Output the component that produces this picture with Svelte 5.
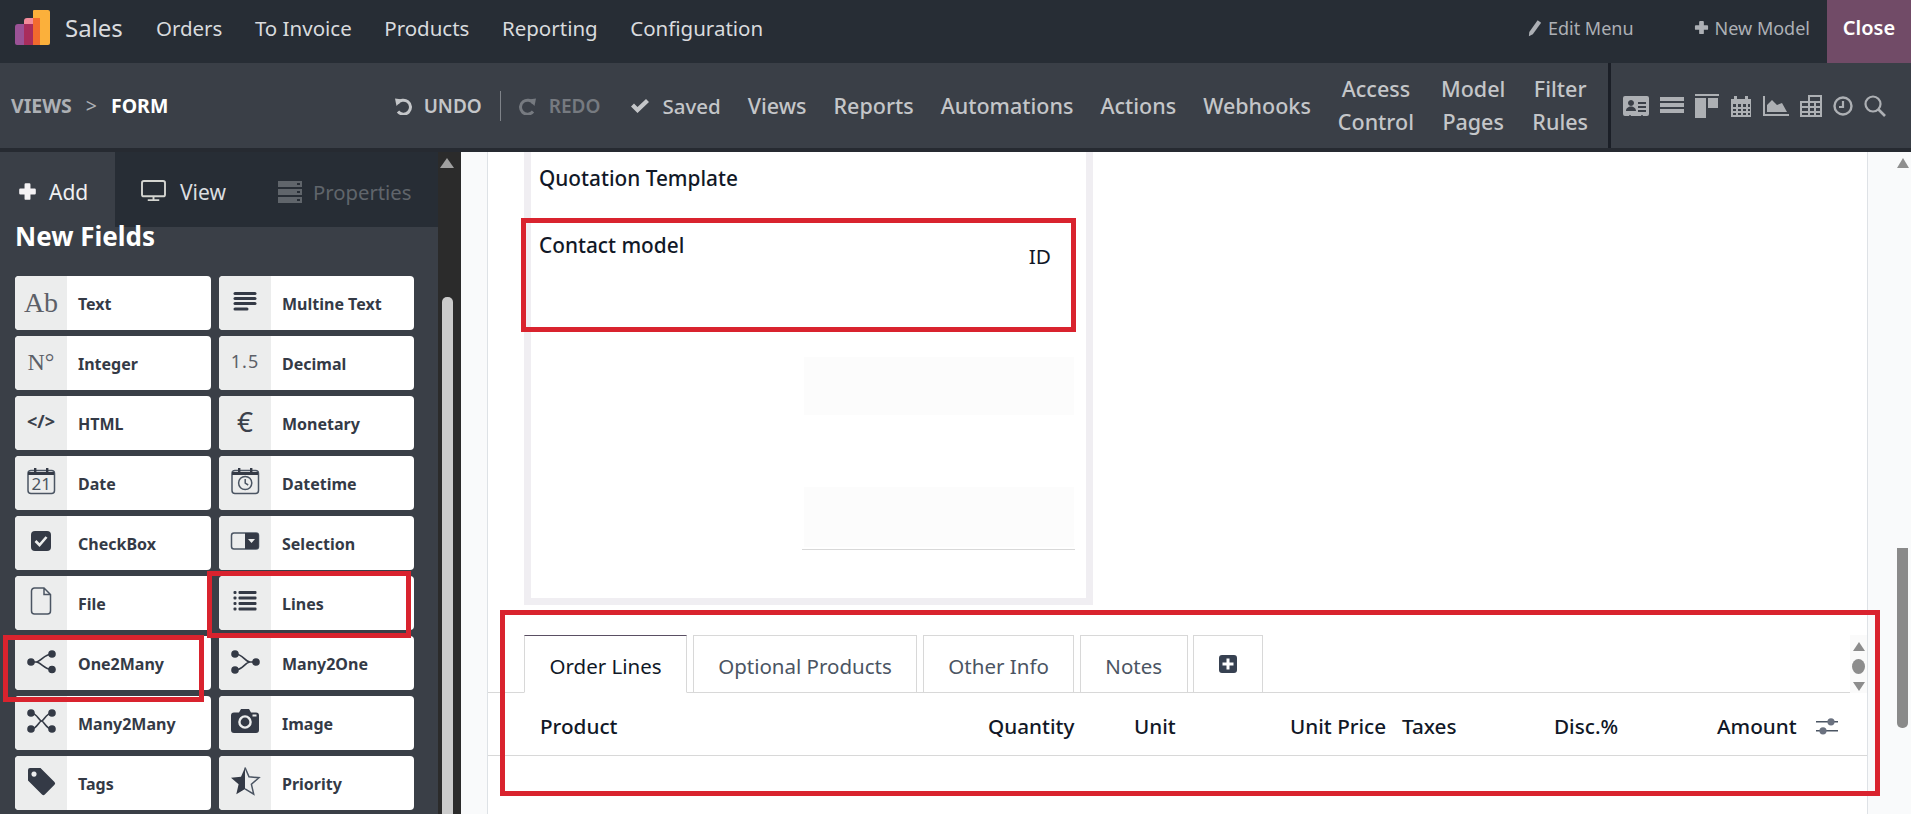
<script>
  const menus = ['Orders', 'To Invoice', 'Products', 'Reporting', 'Configuration']
  const actions = ['Views', 'Reports', 'Automations', 'Actions', 'Webhooks']
  const doubles = [['Access', 'Control'], ['Model', 'Pages'], ['Filter', 'Rules']]
  const fields = [
    ['ab', 'Text'], ['lines', 'Multine Text'],
    ['no', 'Integer'], ['dec', 'Decimal'],
    ['code', 'HTML'], ['euro', 'Monetary'],
    ['date', 'Date'], ['datetime', 'Datetime'],
    ['check', 'CheckBox'], ['select', 'Selection'],
    ['file', 'File'], ['list', 'Lines'],
    ['o2m', 'One2Many'], ['m2o', 'Many2One'],
    ['m2m', 'Many2Many'], ['camera', 'Image'],
    ['tag', 'Tags'], ['star', 'Priority']
  ]
  const tabs = ['Order Lines', 'Optional Products', 'Other Info', 'Notes']
  const columns = ['Product', 'Quantity', 'Unit', 'Unit Price', 'Taxes', 'Disc.%', 'Amount']
</script>

{#snippet fieldIcon(kind)}
  {#if kind === 'ab'}
    <span class="glyph serif ab">Ab</span>
  {:else if kind === 'no'}
    <span class="glyph serif no">N°</span>
  {:else if kind === 'dec'}
    <span class="glyph dec">1.5</span>
  {:else if kind === 'code'}
    <span class="glyph code">&lt;/&gt;</span>
  {:else if kind === 'euro'}
    <span class="glyph euro">€</span>
  {:else}
    <svg class="ficon" viewBox="0 0 32 32" width="32" height="32">
      {#if kind === 'lines'}
        <rect x="4.5" y="7" width="23" height="3" rx="1.5" />
        <rect x="4.5" y="12" width="23" height="3" rx="1.5" />
        <rect x="4.5" y="17" width="23" height="3" rx="1.5" />
        <rect x="4.5" y="22.5" width="15" height="3" rx="1.5" />
      {:else if kind === 'date'}
        <rect class="thin" x="3" y="5.5" width="26.5" height="23" rx="3" />
        <path d="M9 3h2.4v4H9zM21 3h2.4v4H21zM3 7h26v3H3z" />
        <text x="16.2" y="25" text-anchor="middle" class="daynum">21</text>
      {:else if kind === 'datetime'}
        <rect class="thin" x="3" y="5.5" width="26.5" height="23" rx="3" />
        <path d="M9 3h2.4v4H9zM21 3h2.4v4H21zM3 7h26v3H3z" />
        <circle class="thin" cx="16.2" cy="18" r="6.6" />
        <path class="thin" d="M16.2 14v4.2l3 1.8" />
      {:else if kind === 'check'}
        <rect x="6" y="6" width="20" height="20" rx="4" />
        <path d="M10.5 16l4 4 7-8" fill="none" stroke="#eceded" stroke-width="2.6" />
      {:else if kind === 'select'}
        <rect class="thin" x="2.5" y="8" width="27" height="16" rx="2.5" />
        <path d="M16 8h11a2.5 2.5 0 0 1 2.5 2.5v11a2.5 2.5 0 0 1-2.5 2.5h-11z" />
        <path d="M19 14l3.5 4 3.5-4" fill="#eceded" />
      {:else if kind === 'file'}
        <path class="thin" d="M9.5 3h9.5l6.5 6.5V26a3 3 0 0 1-3 3H9.5a3 3 0 0 1-3-3V6a3 3 0 0 1 3-3zM19 3v6.5h6.5" />
      {:else if kind === 'list'}
        <rect x="4.5" y="6" width="3" height="3" rx="1" />
        <rect x="4.5" y="11.5" width="3" height="3" rx="1" />
        <rect x="4.5" y="17" width="3" height="3" rx="1" />
        <rect x="4.5" y="22.5" width="3" height="3" rx="1" />
        <rect x="9.5" y="6" width="18" height="3" rx="1" />
        <rect x="9.5" y="11.5" width="18" height="3" rx="1" />
        <rect x="9.5" y="17" width="18" height="3" rx="1" />
        <rect x="9.5" y="22.5" width="18" height="3" rx="1" />
      {:else if kind === 'o2m'}
        <circle cx="6" cy="17" r="3.8" /><circle cx="27" cy="9" r="3.8" /><circle cx="27" cy="24.5" r="3.8" />
        <path class="wire" d="M6 17h5c5 0 8-8 16-8M11 17c5 0 8 7.5 16 7.5" />
      {:else if kind === 'm2o'}
        <circle cx="27" cy="17" r="3.8" /><circle cx="6" cy="9" r="3.8" /><circle cx="6" cy="25" r="3.8" />
        <path class="wire" d="M27 17h-6c-5 0-7-8-15-8M21 17c-5 0-7 8-15 8" />
      {:else if kind === 'm2m'}
        <circle cx="6" cy="8" r="3.8" /><circle cx="27" cy="8" r="3.8" /><circle cx="6" cy="24" r="3.8" /><circle cx="27" cy="24" r="3.8" />
        <path class="wire" d="M6 8c6 0 8 8 10.5 8S21 8 27 8M6 24c6 0 8-8 10.5-8S21 24 27 24" />
      {:else if kind === 'camera'}
        <path d="M5 7.5h5l2-3.5h8l2 3.5h5a3 3 0 0 1 3 3V25a3 3 0 0 1-3 3H5a3 3 0 0 1-3-3V10.500a3 3 0 0 1 3-3z" />
        <circle cx="16" cy="17" r="5.6" fill="none" stroke="#eceded" stroke-width="2.4" />
        <rect x="23.500" y="9.500" width="4" height="2" fill="#eceded" />
      {:else if kind === 'tag'}
        <path fill-rule="evenodd" d="M5 3h10.500l14 14a2 2 0 0 1 0 2.800l-9.700 9.700a2 2 0 0 1-2.800 0L3 15.500V5a2 2 0 0 1 2-2zM9 6.500a2.600 2.600 0 1 0 .01 0z" />
      {:else if kind === 'star'}
        <path class="thin" d="M16 2.500l4 9.300 10 .9-7.600 6.600 2.300 9.900L16 23.900" />
        <path d="M16 2.500l-4 9.300-10 .9 7.600 6.600-2.300 9.900L16 23.900z" />
      {/if}
    </svg>
  {/if}
{/snippet}

<div class="app">
  <header class="topbar">
    <svg class="logo" viewBox="0 0 35 35" width="35" height="35">
      <path d="M19 0h14a2 2 0 0 1 2 2v31a2 2 0 0 1-2 2H18V1a1 1 0 0 1 1-1z" fill="#fbb03b" />
      <path d="M18 8h7v27h-7z" fill="#f26a2e" />
      <path d="M12 8h6v27H9V11a3 3 0 0 1 3-3z" fill="#f28a9a" />
      <path d="M9 14h9v21H9z" fill="#a92d5c" />
      <path d="M3 14h6v21H2a2 2 0 0 1-2-2V17a3 3 0 0 1 3-3z" fill="#9b5296" />
    </svg>
    <span class="brand">Sales</span>
    <nav class="menus">
      {#each menus as menu}
        <span>{menu}</span>
      {/each}
    </nav>
    <span class="sys edit">
      <svg viewBox="0 0 16 20" width="14" height="18"><path d="M11 1l4 3-9.500 13L1 19.500l.5-5z" fill="#adb0b5" /></svg>
      Edit Menu
    </span>
    <span class="sys new">
      <svg viewBox="0 0 16 16" width="15" height="15"><path d="M6.500 1h3a1 1 0 0 1 1 1v3.500H14a1 1 0 0 1 1 1v3a1 1 0 0 1-1 1h-3.500V14a1 1 0 0 1-1 1h-3a1 1 0 0 1-1-1v-3.500H2a1 1 0 0 1-1-1v-3a1 1 0 0 1 1-1h3.500V2a1 1 0 0 1 1-1z" fill="#adb0b5" /></svg>
      New Model
    </span>
    <span class="close">Close</span>
  </header>

  <div class="toolbar">
    <div class="crumbs">
      <span class="crumb">VIEWS</span>
      <span class="sep">&gt;</span>
      <span class="crumb current">FORM</span>
    </div>
    <div class="actions">
      <span class="undo">
        <svg viewBox="0 0 18 18" width="18" height="18"><path d="M3.500 6.500A7 7 0 1 1 4 14.500" fill="none" stroke="currentColor" stroke-width="3" /><path d="M1 1.500l7.500 1-6 6.500z" fill="currentColor" /></svg>
        UNDO
      </span>
      <span class="redo">
        <svg viewBox="0 0 18 18" width="18" height="18"><path d="M14.500 6.500A7 7 0 1 0 14 14.500" fill="none" stroke="currentColor" stroke-width="3" /><path d="M17 1.500l-7.500 1 6 6.500z" fill="currentColor" /></svg>
        REDO
      </span>
      <span class="saved">
        <svg viewBox="0 0 20 16" width="20" height="16"><path d="M1 8.500l3-3 3.500 3.500L16 1l3 3L7.500 15z" fill="currentColor" /></svg>
        Saved
      </span>
      {#each actions as action}
        <span>{action}</span>
      {/each}
      {#each doubles as pair}
        <span class="double">{pair[0]}<br />{pair[1]}</span>
      {/each}
    </div>
    <div class="views">
      <svg viewBox="0 0 26 20" width="26" height="20"><path fill-rule="evenodd" d="M2 0h22a2 2 0 0 1 2 2v16a2 2 0 0 1-2 2h-4a1 1 0 0 0-2 0H8a1 1 0 0 0-2 0H2a2 2 0 0 1-2-2V2a2 2 0 0 1 2-2zM8 4a3 3 0 1 0 .01 0zM3 15h10c0-6-10-6-10 0zM15 6v2h8V6zM15 10v2h8v-2zM15 14v2h8v-2z" /></svg>
      <svg viewBox="0 0 24 20" width="24" height="20"><path d="M0 1h24v4H0zM0 7h24v4H0zM0 13h24v4H0z" /></svg>
      <svg viewBox="0 0 24 24" width="24" height="24"><path d="M0 0h24v2H0zM0 4h11v20H0zM13 4h10v10H13z" /></svg>
      <svg viewBox="0 0 22 22" width="22" height="22"><path fill-rule="evenodd" d="M1 4h3V1h3v3h8V1h3v3h3v18H1zM3 9v3h3V9zM8 9v3h3V9zM13 9v3h3V9zM18 9h2v3h-2zM3 14v2h3v-2zM8 14v2h3v-2zM13 14v2h3v-2zM18 14h2v2h-2zM3 18v2h3v-2zM8 18v2h3v-2zM13 18v2h3v-2zM18 18h2v2h-2z" /></svg>
      <svg viewBox="0 0 26 20" width="26" height="20"><path d="M0 0h2v18h24v2H0zM4 16V9l5-5 5 5 5-2 5 9z" /></svg>
      <svg viewBox="0 0 22 22" width="22" height="22"><path fill-rule="evenodd" d="M8 0h14v22H0V6h8zM10 2v4h10V2zM2 8v3h6V8zM10 8v3h4V8zM16 8v3h4V8zM2 13v3h6v-3zM10 13v3h4v-3zM16 13v3h4v-3zM2 18v2h6v-2zM10 18v2h4v-2zM16 18v2h4v-2z" /></svg>
      <svg viewBox="0 0 20 20" width="20" height="20"><circle cx="10" cy="10" r="8.500" fill="none" stroke="#adb0b4" stroke-width="2.400" /><path d="M10 5v6H6" fill="none" stroke="#adb0b4" stroke-width="2.200" /></svg>
      <svg viewBox="0 0 22 22" width="22" height="22"><circle cx="9" cy="9" r="7.500" fill="none" stroke="#adb0b4" stroke-width="2.200" /><path d="M14.500 14.500L21 21" stroke="#adb0b4" stroke-width="2.600" /></svg>
    </div>
  </div>

  <div class="body">
    <aside class="sidebar">
      <div class="panel">
        <div class="side-tabs">
          <span class="side-tab active">
            <svg viewBox="0 0 16 16" width="19" height="19"><path d="M6.500 1h3a1 1 0 0 1 1 1v3.500H14a1 1 0 0 1 1 1v3a1 1 0 0 1-1 1h-3.500V14a1 1 0 0 1-1 1h-3a1 1 0 0 1-1-1v-3.500H2a1 1 0 0 1-1-1v-3a1 1 0 0 1 1-1h3.500V2a1 1 0 0 1 1-1z" fill="#f4f2f4" /></svg>
            Add
          </span>
          <span class="side-tab view">
            <svg viewBox="0 0 26 24" width="25" height="23"><rect x="1" y="1" width="24" height="16" rx="2" fill="none" stroke="#d4d5d0" stroke-width="2" /><path d="M12 17h2v3h-2zM7 20h12v2H7z" fill="#d4d5d0" /></svg>
            View
          </span>
          <span class="side-tab off">
            <svg viewBox="0 0 24 22" width="24" height="22"><path fill-rule="evenodd" d="M0 0h24v6H0zM0 8h24v6H0zM0 16h24v6H0zM19 2v2h3V2zM19 10v2h3v-2zM19 18v2h3v-2z" fill="#60656b" /></svg>
            Properties
          </span>
        </div>
        <div class="fields-panel">
          <h2>New Fields</h2>
          <div class="field-grid">
            {#each fields as f}
              <div class="card">
                <div class="icon-box">{@render fieldIcon(f[0])}</div>
                <span class="card-label">{f[1]}</span>
              </div>
            {/each}
          </div>
        </div>
      </div>
      <div class="side-track">
        <i class="arrow-up"></i>
        <i class="side-thumb"></i>
      </div>
    </aside>

    <main class="main">
      <div class="gutter"></div>
      <div class="sheet">
        <div class="form-card">
          <div class="row quotation">Quotation Template</div>
          <div class="row contact">
            <span>Contact model</span>
            <span class="id">ID</span>
          </div>
          <div class="placeholder first"></div>
          <div class="placeholder second"></div>
          <div class="rule"></div>
        </div>

        <div class="tabs">
          {#each tabs as tab, i}
            <span class="tab" class:current={i === 0}>{tab}</span>
          {/each}
          <span class="tab plus">
            <svg viewBox="0 0 18 18" width="18" height="18"><path fill-rule="evenodd" d="M3 0h12a3 3 0 0 1 3 3v12a3 3 0 0 1-3 3H3a3 3 0 0 1-3-3V3a3 3 0 0 1 3-3zM7.500 3.500v4h-4v3h4v4h3v-4h4v-3h-4v-4z" fill="#374151" /></svg>
          </span>
          <div class="tab-scroll">
            <i class="tri up"></i>
            <i class="dot"></i>
            <i class="tri down"></i>
          </div>
        </div>
        <div class="thead">
          {#each columns as col}
            <span>{col}</span>
          {/each}
          <svg viewBox="0 0 22 20" width="22" height="20"><path d="M0 5h22v1.600H0zM0 14h22v1.600H0z" fill="#4b5563" /><circle cx="15" cy="5.800" r="3.600" fill="#6b7280" /><circle cx="7" cy="14.800" r="3.600" fill="#6b7280" /></svg>
        </div>
      </div>
      <div class="page-track">
        <i class="arrow-up small"></i>
        <i class="page-thumb"></i>
      </div>
    </main>
  </div>

  <!-- annotation boxes drawn over the screenshot -->
  <div class="mark mark-contact"></div>
  <div class="mark mark-lines"></div>
  <div class="mark mark-o2m"></div>
  <div class="mark mark-table"></div>
</div>

<style>
  :global(body) {
    margin: 0;
    background: #fff;
  }

  .app {
    position: relative;
    width: 1911px;
    height: 814px;
    overflow: hidden;
    display: flex;
    flex-direction: column;
    font-family: "Noto Sans", sans-serif;
  }

  .topbar {
    height: 63px;
    flex: none;
    display: flex;
    align-items: center;
    background: #272d35;
    color: #d9dbde;
    font-size: 20.5px;
    padding-left: 15px;
  }

  .logo {
    flex: none;
    margin-bottom: 8px;
    margin-right: 15px;
  }

  .brand {
    font-size: 24px;
    margin-right: 33px;
    margin-bottom: 8px;
  }

  .menus {
    display: flex;
    gap: 32.500px;
    margin-bottom: 8px;
  }

  .sys {
    display: flex;
    align-items: center;
    gap: 6px;
    font-size: 18px;
    color: #adb0b5;
    margin-bottom: 8px;
  }

  .edit {
    margin-left: auto;
    margin-right: 60px;
  }

  .new {
    margin-right: 17px;
  }

  .close {
    width: 84px;
    height: 63px;
    background: #714b67;
    color: #fff;
    font-weight: 600;
    font-size: 20px;
    padding-bottom: 8px;
    box-sizing: border-box;
    display: flex;
    align-items: center;
    justify-content: center;
  }

  .toolbar {
    height: 85px;
    flex: none;
    display: flex;
    align-items: center;
    background: #3a3f47;
    border-bottom: 4px solid #262a31;
    font-size: 21.5px;
    font-weight: 500;
    color: #c4c6c9;
  }

  .crumbs {
    display: flex;
    align-items: center;
    padding-left: 11px;
    font-size: 19.5px;
    gap: 14px;
  }

  .crumb {
    font-weight: 700;
    color: #adb0b5;
  }

  .crumb.current {
    color: #fff;
  }

  .sep {
    font-weight: 400;
    color: #adb0b5;
  }

  .actions {
    margin-left: auto;
    display: flex;
    align-items: center;
    gap: 27px;
    padding-right: 20px;
  }

  .undo, .redo, .saved {
    display: flex;
    align-items: center;
    gap: 12px;
  }

  .undo, .redo {
    font-size: 19px;
    font-weight: 600;
  }

  .saved {
    font-size: 20.5px;
  }

  .undo {
    margin-right: -9px;
    padding-right: 18px;
    border-right: 1px solid #7f8389;
    height: 30px;
  }

  .redo {
    color: #767a80;
    margin-right: 3px;
  }

  .double {
    text-align: center;
    line-height: 33px;
    margin-bottom: 2px;
  }

  .views {
    width: 303px;
    height: 85px;
    flex: none;
    display: flex;
    align-items: center;
    gap: 11px;
    padding-left: 12px;
    box-sizing: border-box;
    border-left: 3px solid #1b1f27;
  }

  .views svg {
    fill: #adb0b4;
    flex: none;
  }

  .body {
    flex: 1;
    display: flex;
    min-height: 0;
  }

  .sidebar {
    width: 461px;
    flex: none;
    display: flex;
    background: #2b2b2b;
  }

  .panel {
    width: 438px;
    flex: none;
    background: #272d35;
  }

  .side-tabs {
    display: flex;
    height: 75px;
    font-size: 21px;
    color: #dcdee0;
  }

  .side-tab {
    display: flex;
    align-items: center;
    gap: 12px;
    padding-top: 4px;
  }

  .side-tab.active {
    width: 115px;
    padding-left: 18px;
    box-sizing: border-box;
    background: #3a3f47;
    color: #f0f0f2;
  }

  .side-tab.view {
    margin-left: 26px;
    gap: 14px;
  }

  .side-tab.off {
    margin-left: 52px;
    gap: 11px;
    font-size: 20.3px;
    color: #60656b;
  }

  .fields-panel {
    background: #3a3f47;
    padding: 0 15px;
    height: 587px;
  }

  h2 {
    margin: 0;
    height: 49px;
    color: #fff;
    font-size: 26px;
    font-weight: 700;
    line-height: 18px;
  }

  .field-grid {
    display: grid;
    grid-template-columns: 196px 195px;
    grid-auto-rows: 54px;
    gap: 6px 8px;
  }

  .card {
    display: flex;
    align-items: center;
    background: #fff;
    border-radius: 4px;
    overflow: hidden;
  }

  .icon-box {
    width: 52px;
    height: 100%;
    flex: none;
    background: #eceded;
    display: flex;
    align-items: center;
    justify-content: center;
    color: #3b414b;
  }

  .ficon {
    margin-top: -4px;
    fill: #343a46;
  }

  .ficon .thin {
    fill: none;
    stroke: #4b5563;
    stroke-width: 1.500;
  }

  .ficon .wire {
    fill: none;
    stroke: #343a46;
    stroke-width: 1.600;
  }

  .daynum {
    font-size: 17px;
    fill: #4b5563;
    font-family: "Noto Sans", sans-serif;
  }

  .glyph {
    margin-top: -4px;
    line-height: 32px;
  }

  .serif {
    font-family: "Liberation Serif", serif;
    color: #5c6068;
  }

  .ab {
    font-size: 28px;
    margin-top: -1px;
  }

  .no {
    font-size: 24px;
    margin-top: -2px;
  }

  .dec {
    font-size: 18px;
    letter-spacing: 1px;
    color: #5c6068;
  }

  .code {
    font-size: 18px;
    font-weight: 700;
  }

  .euro {
    font-size: 28px;
  }

  .card-label {
    margin-left: 11px;
    margin-top: 1px;
    font-size: 16px;
    font-weight: 700;
    color: #343a46;
  }

  .side-track {
    flex: 1;
    padding-left: 2px;
  }

  .arrow-up {
    display: block;
    width: 0;
    height: 0;
    margin-top: 6px;
    border-left: 7px solid transparent;
    border-right: 7px solid transparent;
    border-bottom: 10px solid #a0a0a0;
  }

  .arrow-up.small {
    border-left-width: 6px;
    border-right-width: 6px;
    border-bottom-color: #8f8f8f;
  }

  .side-thumb {
    display: block;
    width: 11px;
    height: 540px;
    margin-top: 129px;
    margin-left: 2px;
    background: #cbcbcb;
    border-radius: 5px 5px 0 0;
  }

  .main {
    flex: 1;
    display: flex;
    min-width: 0;
  }

  .gutter {
    width: 26px;
    flex: none;
    background: #f9fafb;
    border-right: 1px solid #dee2e6;
  }

  .sheet {
    flex: 1;
    min-width: 0;
    background: #fff;
  }

  .form-card {
    width: 569px;
    height: 453px;
    margin-left: 36px;
    box-sizing: border-box;
    border: 7px solid #f0eef2;
    border-top: 0;
    padding: 12px 12px 0 8px;
    font-size: 20.8px;
    font-weight: 500;
    color: #111827;
  }

  .quotation {
    height: 67px;
    line-height: 28px;
  }

  .contact {
    height: 126px;
    line-height: 28px;
    display: flex;
    justify-content: space-between;
    padding-right: 23px;
  }

  .id {
    margin-top: 11px;
    font-weight: 400;
  }

  .placeholder {
    margin-left: 265px;
    background: #fcfcfc;
  }

  .placeholder.first {
    height: 58px;
  }

  .placeholder.second {
    height: 60px;
    margin-top: 72px;
  }

  .rule {
    margin: 2px -1px 0 263px;
    border-top: 1px solid #d8d8d8;
  }

  .tabs {
    display: flex;
    gap: 5.500px;
    height: 58px;
    margin-top: 30px;
    padding-left: 36px;
    margin-right: 17px;
    box-sizing: border-box;
    border-bottom: 1px solid #d8d8d8;
    position: relative;
  }

  .tab {
    height: 58px;
    box-sizing: border-box;
    padding: 3px 24.500px 0;
    display: flex;
    align-items: center;
    background: #fff;
    border: 1px solid #d8d8d8;
    font-size: 20.5px;
    color: #4b5563;
  }

  .tab.current {
    border-top-color: #5a4f63;
    border-bottom-color: #fff;
    color: #111827;
  }

  .tab.plus {
    width: 70px;
    justify-content: center;
    padding: 0;
  }

  .tab-scroll {
    position: absolute;
    right: -17px;
    top: 0;
    width: 17px;
    height: 58px;
    box-sizing: border-box;
    padding-top: 7px;
    display: flex;
    flex-direction: column;
    align-items: center;
    gap: 8px;
    background: #fafafa;
  }

  .tri {
    width: 0;
    height: 0;
    flex: none;
    border-left: 6.500px solid transparent;
    border-right: 6.500px solid transparent;
  }

  .tri.up {
    border-bottom: 9px solid #8c8c8c;
  }

  .tri.down {
    border-top: 9px solid #8c8c8c;
  }

  .dot {
    width: 13px;
    height: 15px;
    flex: none;
    border-radius: 50%;
    background: #8c8c8c;
  }

  .thead {
    display: grid;
    grid-template-columns: 448px 146px 156px 112px 152px 163px 99px 22px;
    align-items: center;
    height: 63px;
    padding-top: 4px;
    padding-left: 52px;
    box-sizing: border-box;
    border-bottom: 1px solid #d8d8d8;
    font-size: 20.7px;
    font-weight: 500;
    color: #111827;
  }

  .page-track {
    width: 44px;
    flex: none;
    box-sizing: border-box;
    background: #f9fafb;
    border-left: 1px solid #dee2e6;
    padding-left: 29px;
  }

  .page-thumb {
    display: block;
    width: 11px;
    height: 180px;
    margin-top: 380px;
    background: #8a8a8a;
    border-radius: 0 0 5px 5px;
  }

  .mark {
    position: absolute;
    box-sizing: border-box;
    border: 5px solid #d9232e;
  }

  .mark-contact {
    left: 521px;
    top: 218px;
    width: 555px;
    height: 114px;
  }

  .mark-lines {
    left: 207px;
    top: 571px;
    width: 204px;
    height: 67px;
  }

  .mark-o2m {
    left: 3px;
    top: 635px;
    width: 201px;
    height: 67px;
  }

  .mark-table {
    left: 500px;
    top: 610px;
    width: 1380px;
    height: 186px;
  }
</style>
